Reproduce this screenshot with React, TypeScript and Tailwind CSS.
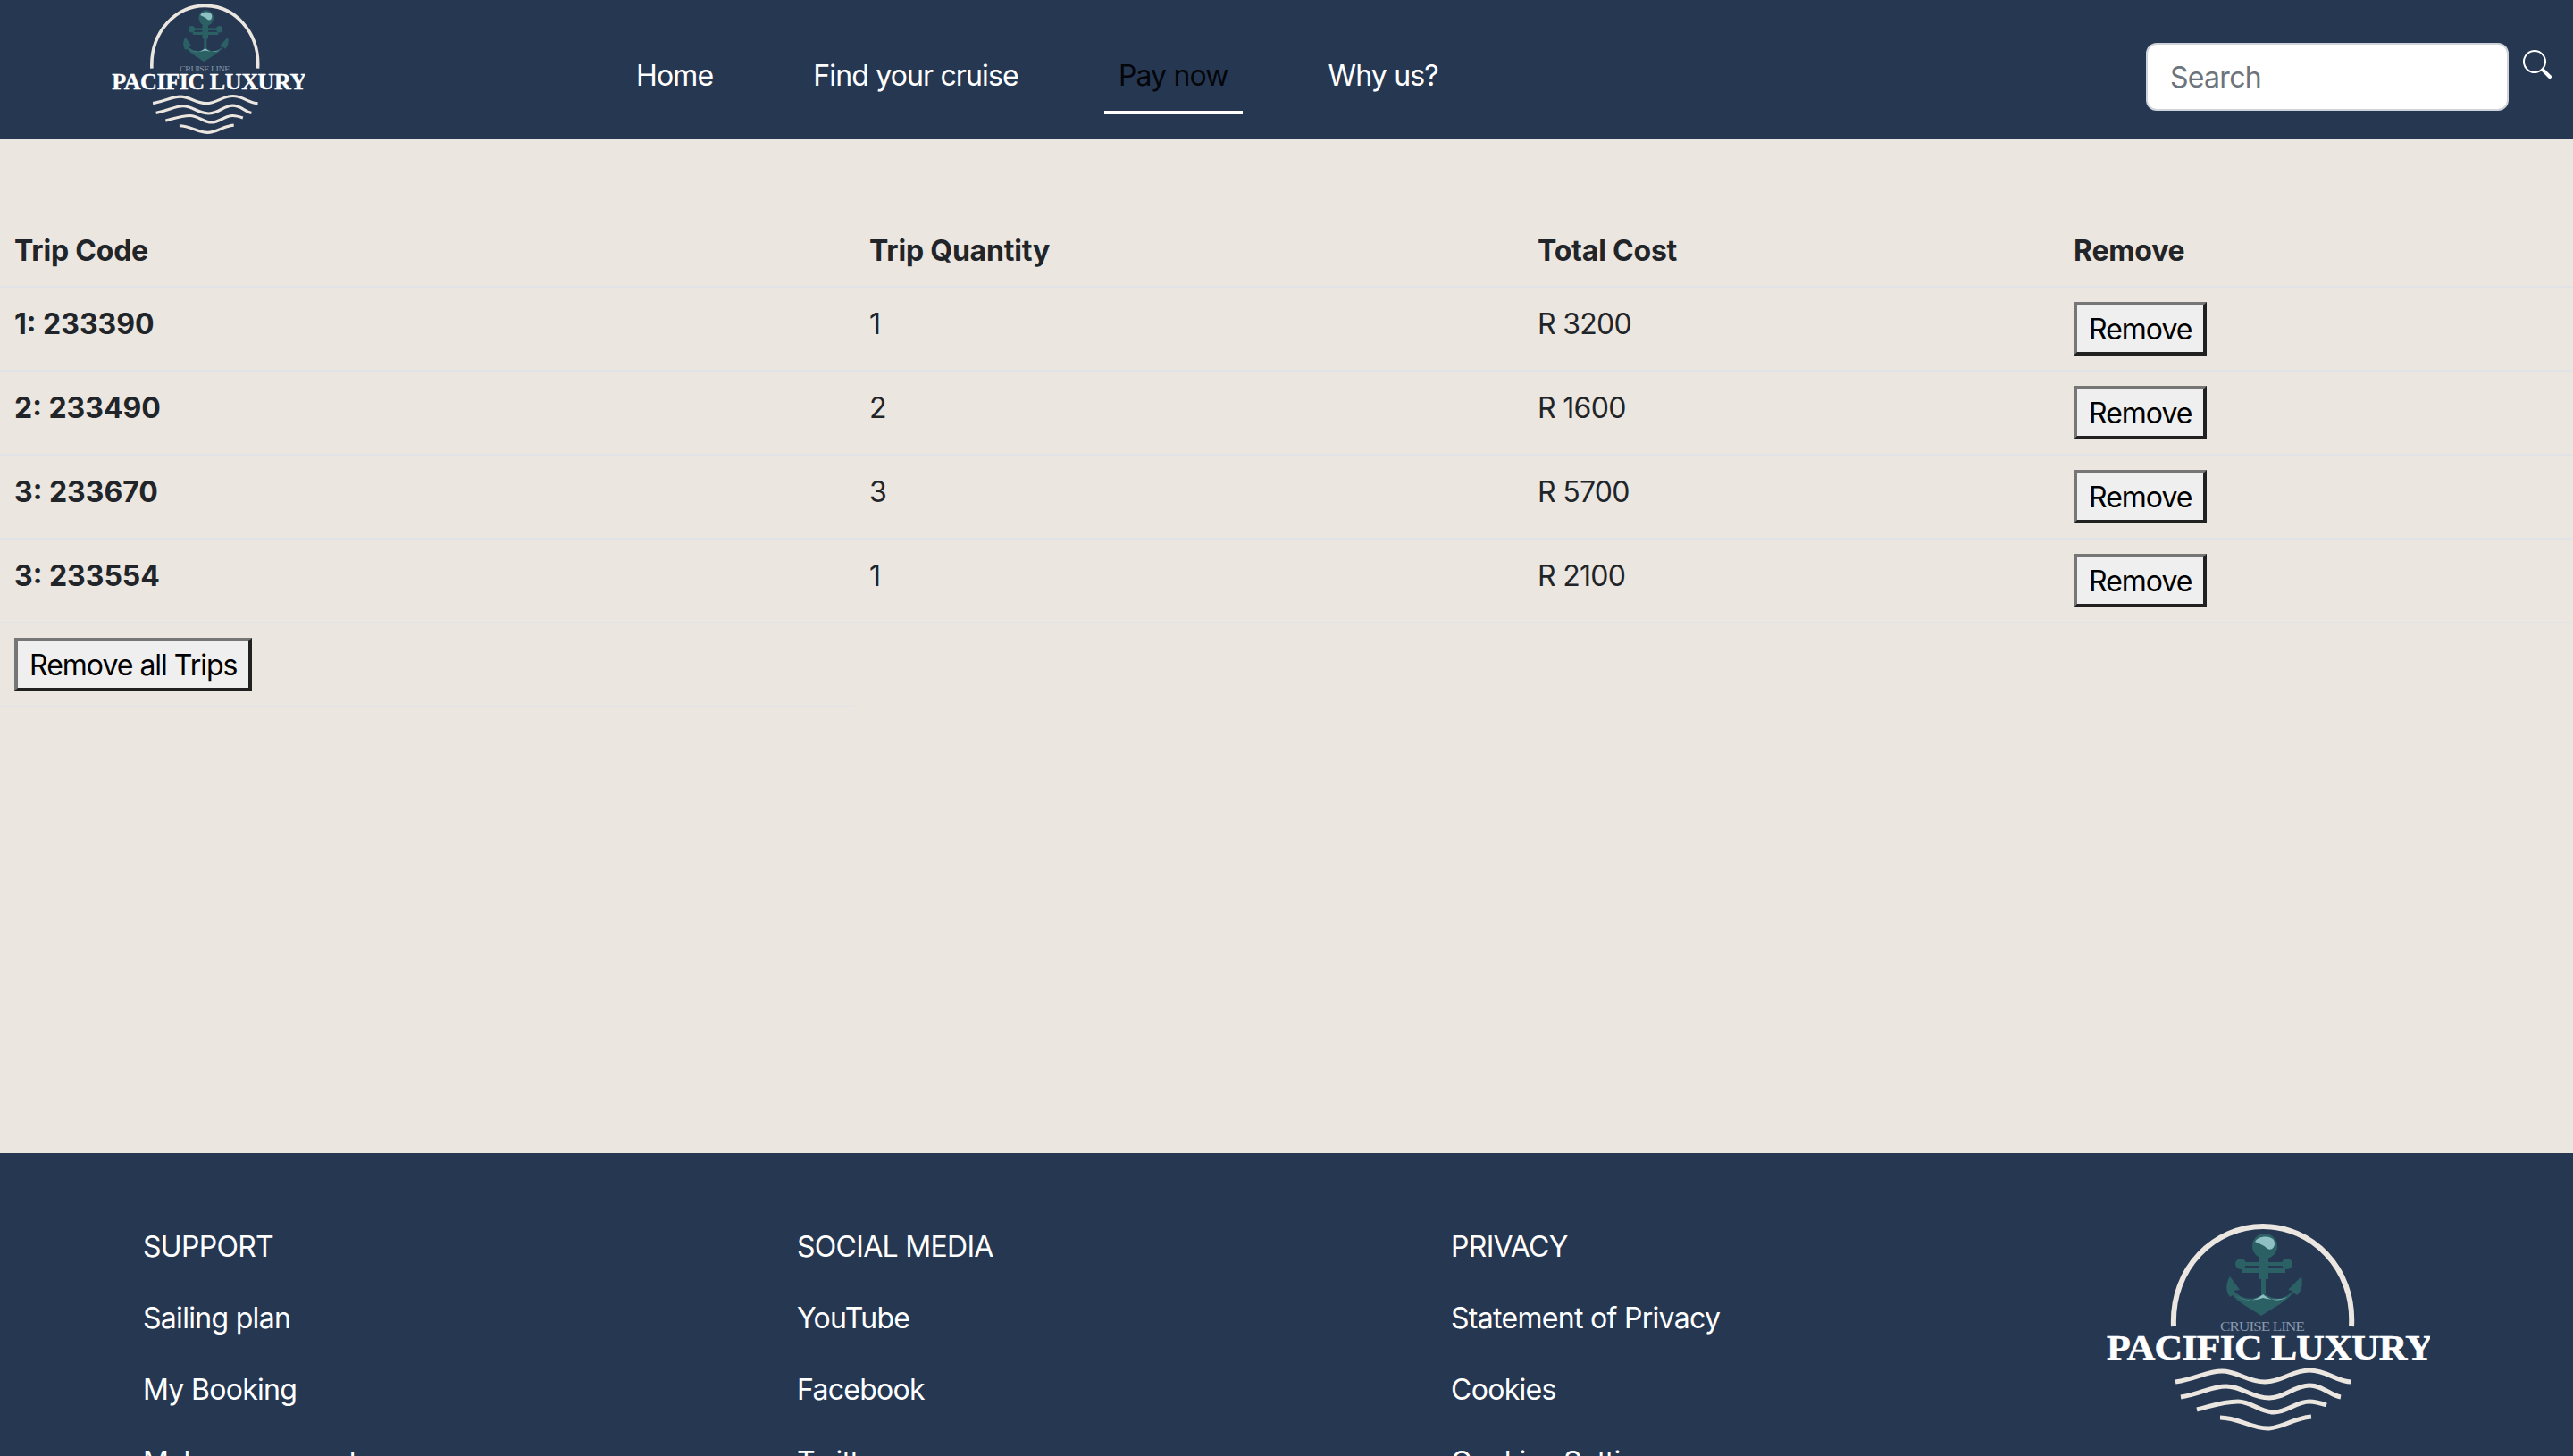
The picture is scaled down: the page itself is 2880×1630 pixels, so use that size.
import React from 'react';
import { BsSearch } from 'react-icons/bs';

const trips = [
  { code: '1: 233390', qty: 1, cost: 'R 3200' },
  { code: '2: 233490', qty: 2, cost: 'R 1600' },
  { code: '3: 233670', qty: 3, cost: 'R 5700' },
  { code: '3: 233554', qty: 1, cost: 'R 2100' },
];

const footerCols = [
  { title: 'SUPPORT', links: ['Sailing plan', 'My Booking', 'Make a payment'] },
  { title: 'SOCIAL MEDIA', links: ['YouTube', 'Facebook', 'Twitter'] },
  { title: 'PRIVACY', links: ['Statement of Privacy', 'Cookies', 'Cookies Settings'] },
];

const navItems = ['Home', 'Find your cruise', 'Pay now', 'Why us?'];

const Logo = ({ className }: { className: string }) => (
  <svg viewBox="36 25 364 245" preserveAspectRatio="none" className={className} fill="none">
    <path d="M113 147 C110 80 160 35 213 35 C266 35 316 80 312 147" stroke="#ebe6e0" strokeWidth="6" />
    {/* anchor */}
    <circle cx="215" cy="57" r="14" fill="#2b6064" />
    <path d="M204 52 C207 46 219 44 225 50 C228 56 224 63 218 60 C214 56 208 54 204 52 Z" fill="#8fc0c4" />
    <rect x="208" y="62" width="11" height="32" fill="#2b6064" />
    <rect x="190" y="75" width="48" height="4" fill="#2b6064" />
    <rect x="190" y="82" width="48" height="5" fill="#2b6064" />
    <circle cx="188" cy="77" r="6" fill="#2b6064" />
    <circle cx="240" cy="77" r="6" fill="#2b6064" />
    <rect x="211" y="93" width="5" height="18" fill="#2b6064" />
    <path
      d="M176 91 L187 106 L180 107 C190 117 202 119 214 110 C226 119 238 117 246 107 L241 106 L256 91 C258 100 256 108 251 112 L247 109 C238 120 225 126 211 135 C198 126 186 121 179 112 L176 114 C171 108 171 99 176 91 Z"
      fill="#2b6064"
    />
    <path d="M183 113 C193 119 203 120 213 111 C222 119 232 119 240 114 C230 118 222 117 213 115 C204 118 193 119 183 113 Z" fill="#8fc0c4" />
    <text x="165" y="152" fontFamily="'Liberation Serif', serif" fontSize="14" fill="#8799ad" textLength="94" lengthAdjust="spacingAndGlyphs">
      CRUISE LINE
    </text>
    <text x="38" y="184" fontFamily="'Liberation Serif', serif" fontWeight="700" fontSize="41" fill="#ffffff" stroke="#ffffff" strokeWidth="0.6" textLength="365" lengthAdjust="spacingAndGlyphs">
      PACIFIC LUXURY
    </text>
    <g stroke="#ebe6e0" strokeWidth="5">
      <path d="M115 209 C140 205 150 197 167 197 C185 197 195 209 215 209 C235 209 245 196 265 196 C285 196 295 209 312 209" />
      <path d="M121 226 C145 222 155 214 172 214 C190 214 200 227 220 227 C238 227 248 213 265 213 C280 213 288 224 300 226" />
      <path d="M139 240 C155 236 168 231 185 231 C200 231 210 243 225 243 C240 243 250 231 265 231 C272 231 278 233 284 235" />
      <path d="M165 249 C185 249 200 261 218 261 C235 261 245 250 267 248" />
    </g>
  </svg>
);

const RemoveButton = ({ label }: { label: string }) => (
  <button className="h-[60px] border-4 border-t-[#767676] border-l-[#767676] border-r-[#212121] border-b-[#212121] bg-[#efefef] px-[13px] pt-[2px] text-[32px] leading-none tracking-[-1px] text-black">
    {label}
  </button>
);

const cellBase = 'border-b-2 border-[#e2e3e8] px-4 pt-[17px] pb-[15px] text-left align-top';

const App: React.FC = () => {
  return (
    <div className="h-screen overflow-hidden bg-[#ebe6e0] font-['Inter',sans-serif] text-[32px] leading-[48px] tracking-[-0.7px] text-[#212529]">
      <header className="flex h-[156px] bg-[#263752]">
        <Logo className="ml-[124px] h-[154px] w-[217px] shrink-0" />
        <nav className="ml-[355px] flex gap-20 tracking-[-0.85px]">
          {navItems.map((item) => (
            <a
              key={item}
              className={
                item === 'Pay now'
                  ? 'mt-[61px] h-[67px] border-b-4 border-white px-4 text-black/90'
                  : 'mt-[61px] h-[67px] px-4 text-white'
              }
            >
              {item}
            </a>
          ))}
        </nav>
        <div className="ml-auto mr-6 mt-12 flex items-start gap-4">
          <div className="flex h-[76px] w-[406px] items-center rounded-xl border-2 border-[#ced4da] bg-white px-[25px] pt-[2px] text-[#6c757d]">
            Search
          </div>
          <BsSearch className="mt-2 h-8 w-8 text-white" />
        </div>
      </header>

      <main className="h-[1135px] pt-[84px]">
        <table className="w-full table-fixed border-separate border-spacing-0">
          <colgroup>
            <col className="w-[957px]" />
            <col className="w-[748px]" />
            <col className="w-[600px]" />
            <col />
          </colgroup>
          <thead>
            <tr>
              <th className={`${cellBase} font-bold tracking-[-0.2px]`}>Trip Code</th>
              <th className={`${cellBase} font-bold tracking-[-0.2px]`}>Trip Quantity</th>
              <th className={`${cellBase} font-bold tracking-[-0.2px]`}>Total Cost</th>
              <th className={`${cellBase} font-bold tracking-[-0.2px]`}>Remove</th>
            </tr>
          </thead>
          <tbody>
            {trips.map((trip) => (
              <tr key={trip.code}>
                <th className={`${cellBase} h-[94px] font-bold tracking-normal`}>{trip.code}</th>
                <td className={cellBase}>{trip.qty}</td>
                <td className={cellBase}>{trip.cost}</td>
                <td className="h-[94px] border-b-2 border-[#e2e3e8] p-4 align-top">
                  <RemoveButton label="Remove" />
                </td>
              </tr>
            ))}
            <tr>
              <td className="h-[94px] border-b-2 border-[#e2e3e8] p-4 align-top">
                <RemoveButton label="Remove all Trips" />
              </td>
            </tr>
          </tbody>
        </table>
      </main>

      <footer className="h-[400px] bg-[#263752] pl-[160px] text-white">
        <div className="grid grid-cols-[732px_732px_732px_1fr]">
          {footerCols.map((col) => (
            <div key={col.title} className="flex flex-col gap-8 pt-[81px]">
              <span>{col.title}</span>
              {col.links.map((link) => (
                <a key={link} className="last:mt-px">{link}</a>
              ))}
            </div>
          ))}
          <Logo className="mt-[72px] h-[245px] w-[364px]" />
        </div>
      </footer>
    </div>
  );
};

export default App;
